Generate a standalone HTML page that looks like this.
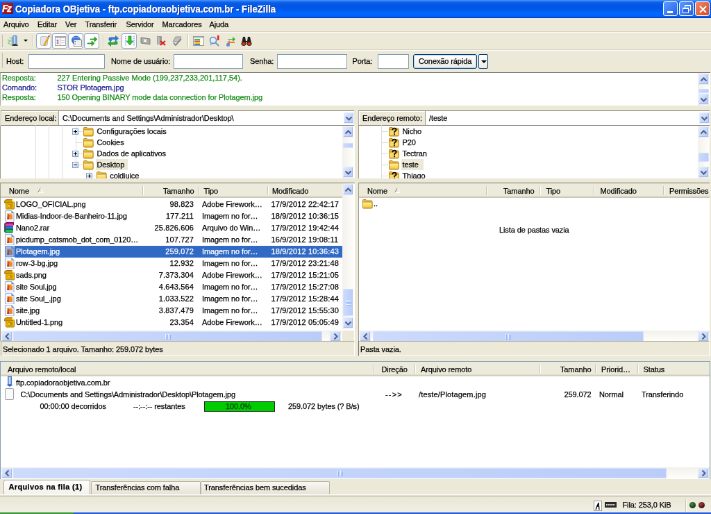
<!DOCTYPE html><html><head><meta charset="utf-8"><style>
html,body{margin:0;padding:0;width:711px;height:514px;overflow:hidden;background:#ECE9D8}
#root{will-change:transform;letter-spacing:-0.1px;position:absolute;left:0;top:0;width:1024px;height:741px;transform:scale(0.6943359375);transform-origin:0 0;background:#ECE9D8;overflow:hidden;font-family:"Liberation Sans",sans-serif;font-size:11px;color:#000}
#root div{box-sizing:border-box}
.t{position:absolute;white-space:nowrap;-webkit-text-stroke:0.25px currentColor}
</style></head><body><div id="root">
<div style="position:absolute;left:0px;top:0px;width:1024px;height:26px;background:linear-gradient(#4A9BFF 0px,#2A7BF5 1.5px,#0A5CE6 4px,#0055E3 10px,#005CEE 15px,#0066FF 19px,#0064FA 23.5px,#0044CC 25px,#003CC0 26px);"></div>
<div style="position:absolute;left:3px;top:4px;width:16px;height:16px;background:linear-gradient(135deg,#C82020,#8A0808);"><div class="t" style="left:0px;top:0px;color:#fff;font:italic bold 14px/16px Liberation Sans;letter-spacing:-1.5px">Fz</div></div>
<div class="t" style="left:21.5px;top:5.0px;line-height:16px;color:#fff;font-weight:bold;font-size:14px;letter-spacing:0px;transform:scaleX(0.94);transform-origin:0 0;text-shadow:1px 1px #0A1E8C">Copiadora OBjetiva - ftp.copiadoraobjetiva.com.br - FileZilla</div>
<div style="position:absolute;left:955px;top:2px;width:21px;height:21px;background:linear-gradient(135deg,#5C9BFF,#2462E8);border:1px solid #fff;border-radius:3px;"><div style="position:absolute;left:5px;top:13px;width:8px;height:3px;background:#fff"></div></div>
<div style="position:absolute;left:978px;top:2px;width:21px;height:21px;background:linear-gradient(135deg,#5C9BFF,#2462E8);border:1px solid #fff;border-radius:3px;"><div style="position:absolute;left:7px;top:4px;width:9px;height:8px;border:1px solid #fff;border-top-width:2px"></div><div style="position:absolute;left:4px;top:8px;width:9px;height:8px;border:1px solid #fff;border-top-width:2px;background:#2A67EA"></div></div>
<div style="position:absolute;left:1001px;top:2px;width:21px;height:21px;background:linear-gradient(135deg,#F08A6C,#D44A20);border:1px solid #fff;border-radius:3px;"><svg width="21" height="21" style="position:absolute;left:0;top:0"><path d="M6 6 L15 15 M15 6 L6 15" stroke="#fff" stroke-width="2"/></svg></div>
<div class="t" style="left:5px;top:28.5px;line-height:13px;">Arquivo</div>
<div class="t" style="left:54px;top:28.5px;line-height:13px;">Editar</div>
<div class="t" style="left:94px;top:28.5px;line-height:13px;">Ver</div>
<div class="t" style="left:122.5px;top:28.5px;line-height:13px;">Transferir</div>
<div class="t" style="left:181.5px;top:28.5px;line-height:13px;">Servidor</div>
<div class="t" style="left:233.5px;top:28.5px;line-height:13px;">Marcadores</div>
<div class="t" style="left:301.5px;top:28.5px;line-height:13px;">Ajuda</div>
<div style="position:absolute;left:0px;top:45px;width:1024px;height:1px;background:#D8D4C4;"></div>
<div style="position:absolute;left:0px;top:46px;width:1024px;height:1px;background:#FFFFFF;"></div>
<div style="position:absolute;left:3px;top:50px;width:1px;height:18px;background:#C1BDA9;"></div>
<div style="position:absolute;left:47px;top:50px;width:1px;height:18px;background:#C5C2B2;"></div>
<div style="position:absolute;left:48px;top:50px;width:1px;height:18px;background:#fff;"></div>
<div style="position:absolute;left:148px;top:50px;width:1px;height:18px;background:#C5C2B2;"></div>
<div style="position:absolute;left:149px;top:50px;width:1px;height:18px;background:#fff;"></div>
<div style="position:absolute;left:270px;top:50px;width:1px;height:18px;background:#C5C2B2;"></div>
<div style="position:absolute;left:271px;top:50px;width:1px;height:18px;background:#fff;"></div>
<div style="position:absolute;left:52.3px;top:48px;width:22px;height:22px;background:#FDFDFC;border:1.6px solid #8CA6CC;border-radius:3px;"></div>
<div style="position:absolute;left:75.3px;top:48px;width:22px;height:22px;background:#FDFDFC;border:1.6px solid #8CA6CC;border-radius:3px;"></div>
<div style="position:absolute;left:98.3px;top:48px;width:22px;height:22px;background:#FDFDFC;border:1.6px solid #8CA6CC;border-radius:3px;"></div>
<div style="position:absolute;left:121.3px;top:48px;width:22px;height:22px;background:#FDFDFC;border:1.6px solid #8CA6CC;border-radius:3px;"></div>
<div style="position:absolute;left:175.3px;top:48px;width:22px;height:22px;background:#FDFDFC;border:1.6px solid #8CA6CC;border-radius:3px;"></div>
<svg style="position:absolute;left:10px;top:50.5px" width="16" height="16" viewBox="0 0 16 16"><path d="M2 3 l4 2 l-2 3 l3 3 l-3 3 l4 1 v-13z" fill="#A8D8A8"/><path d="M1 6 l3 2 l-2 3 l3 2" stroke="#8CC88C" fill="none" stroke-width="1.5"/><rect x="8.5" y="0.5" width="5.5" height="12" rx="1" fill="#80A8E8" stroke="#5A84CC"/><rect x="10" y="1" width="1.6" height="11" fill="#D0E2FC"/><rect x="7.5" y="13" width="8" height="2" fill="#303030"/><rect x="10.5" y="12" width="2" height="2" fill="#303030"/></svg>
<svg style="position:absolute;left:55.5px;top:50.5px" width="16" height="16" viewBox="0 0 16 16"><rect x="2.5" y="1.5" width="10" height="13" rx="1.5" fill="#E6E6EA" stroke="#C4C4C8"/><path d="M14.5 1.5 L7.5 14.5" stroke="#B87000" stroke-width="2.4"/><path d="M14.5 1.5 L7.5 14.5" stroke="#F8C828" stroke-width="1.2"/><path d="M13.8 0.5 L15.5 1.5" stroke="#D03020" stroke-width="2"/></svg>
<svg style="position:absolute;left:78.5px;top:50.5px" width="16" height="16" viewBox="0 0 16 16"><rect x="0.5" y="1.5" width="15" height="13" fill="#FAFAFA" stroke="#A8A8A8"/><rect x="1" y="2" width="14" height="2" fill="#B8B8C0"/><path d="M7.5 4 v10" stroke="#B8B8B8"/><circle cx="4" cy="7.5" r="1.4" fill="#5A8AE0"/><circle cx="4" cy="11" r="1.4" fill="#E05A5A"/><path d="M9 7.5 h5 M9 10.5 h5" stroke="#D0D0D0"/></svg>
<svg style="position:absolute;left:101.5px;top:50.5px" width="16" height="16" viewBox="0 0 16 16"><circle cx="7.5" cy="7" r="6.5" fill="#3A74D8"/><path d="M3 4 q4 -2 9 0" stroke="#A8C8F8" fill="none"/><rect x="4.5" y="6.5" width="11" height="9" fill="#FAFAFA" stroke="#8C8C8C"/><circle cx="6.5" cy="9" r="1" fill="#3A7AE0"/><circle cx="6.5" cy="12.5" r="1" fill="#E07070"/><path d="M9 9.5 h5 M9 12.5 h5" stroke="#C8C8C8"/></svg>
<svg style="position:absolute;left:124.5px;top:50.5px" width="16" height="16" viewBox="0 0 16 16"><path d="M5 5 h6 v-3 l4 3.5 l-4 3.5 v-3 h-6z" fill="#20B020" stroke="#0A7A0A" stroke-width="0.6"/><path d="M1 11 h6 v-3 l4 3.5 l-4 3.5 v-3 h-6z" fill="#20B020" stroke="#0A7A0A" stroke-width="0.6"/></svg>
<svg style="position:absolute;left:155px;top:50.5px" width="16" height="16" viewBox="0 0 16 16"><path d="M2 7 v-2.5 q0 -1.5 1.5 -1.5 h8 v-2.5 l4 3.8 l-4 3.8 v-2.5 h-6 v2z" fill="#2A7CE8" stroke="#0A4AA8" stroke-width="0.6"/><path d="M14 9 v2.5 q0 1.5 -1.5 1.5 h-8 v2.5 l-4 -3.8 l4 -3.8 v2.5 h6 v-2z" fill="#20B040" stroke="#0A7020" stroke-width="0.6"/></svg>
<svg style="position:absolute;left:178.5px;top:50.5px" width="16" height="16" viewBox="0 0 16 16"><path d="M2 1 v14 M14 1 v14" stroke="#7AA8E8" stroke-dasharray="1.5 1.5" stroke-width="1.5"/><path d="M6 1 h4 v7 h3 l-5 6 l-5 -6 h3z" fill="#30C030" stroke="#0A7A0A" stroke-width="0.6"/></svg>
<svg style="position:absolute;left:201.5px;top:50.5px" width="16" height="16" viewBox="0 0 16 16"><path d="M1 3 l13 2 v8 l-13 -2z" fill="#A8A8A8" stroke="#808080"/><path d="M5 5.5 l4 4 M9 5.5 l-4 4" stroke="#fff" stroke-width="1.6"/></svg>
<svg style="position:absolute;left:224px;top:50.5px" width="16" height="16" viewBox="0 0 16 16"><rect x="2" y="1" width="7" height="12" rx="1" fill="#9A9A9A"/><rect x="3.5" y="2" width="2" height="10" fill="#C8C8C8"/><path d="M7 8 l7 6 M14 8 l-7 6" stroke="#E01818" stroke-width="2.2"/></svg>
<svg style="position:absolute;left:247px;top:50.5px" width="16" height="16" viewBox="0 0 16 16"><path d="M2 9 l4 -7 h8 l-4 7z" fill="#C0C0C0" stroke="#909090"/><path d="M3 11 l3 3 l8 -9" stroke="#8A8A8A" stroke-width="2" fill="none"/></svg>
<svg style="position:absolute;left:278px;top:50.5px" width="16" height="16" viewBox="0 0 16 16"><rect x="0.5" y="1.5" width="15" height="13" fill="#F4F4F4" stroke="#9A9A9A"/><rect x="1" y="2" width="14" height="2" fill="#B8C8E0"/><rect x="2" y="5" width="8" height="2" fill="#40C040"/><rect x="2" y="7.5" width="8" height="2" fill="#E04040"/><rect x="2" y="10" width="8" height="2" fill="#F0D020"/><rect x="2" y="12" width="8" height="2" fill="#4080E0"/><rect x="10.5" y="5" width="4" height="9" fill="#FFFFE0"/></svg>
<svg style="position:absolute;left:301px;top:50.5px" width="16" height="16" viewBox="0 0 16 16"><circle cx="6" cy="7" r="4.5" fill="#E8F0FF" stroke="#5080C8" stroke-width="1.4"/><path d="M9 10 l5 5" stroke="#8090A0" stroke-width="2"/><rect x="12" y="0" width="2.5" height="7" fill="#E02020"/><path d="M2 14 l2 -3" stroke="#80A8E0" stroke-width="2"/></svg>
<svg style="position:absolute;left:325px;top:50.5px" width="16" height="16" viewBox="0 0 16 16"><path d="M3 5 h7 v-3 l4 3.5 l-4 3.5 v-3 h-7z" fill="#30B030"/><path d="M13 9 h-7 v-2 l-4 3 l4 3 v-2 h7z" fill="#F08020"/><rect x="1" y="11" width="5" height="5" rx="2" fill="#5A90E0"/></svg>
<svg style="position:absolute;left:347px;top:50.5px" width="16" height="16" viewBox="0 0 16 16"><path d="M3 2 h3 l1 6 h2 l1 -6 h3 l2 9 h-5 l-1 -1 h-2 l-1 1 h-5z" fill="#202020"/><ellipse cx="4" cy="12" rx="3.2" ry="2.5" fill="#E83010" stroke="#202020"/><ellipse cx="12" cy="12" rx="3.2" ry="2.5" fill="#E83010" stroke="#202020"/></svg>
<div style="position:absolute;left:34px;top:57px;width:0;height:0;border-left:3px solid transparent;border-right:3px solid transparent;border-top:3px solid #000"></div>
<div style="position:absolute;left:0px;top:71px;width:1024px;height:1px;background:#D8D4C4;"></div>
<div style="position:absolute;left:0px;top:72px;width:1024px;height:1px;background:#FFFFFF;"></div>
<div style="position:absolute;left:3px;top:76px;width:1px;height:22px;background:#C1BDA9;"></div>
<div class="t" style="left:9px;top:81.5px;line-height:13px;">Host:</div>
<div class="t" style="left:160px;top:81.5px;line-height:13px;">Nome de usuário:</div>
<div class="t" style="left:360px;top:81.5px;line-height:13px;">Senha:</div>
<div class="t" style="left:507.5px;top:81.5px;line-height:13px;">Porta:</div>
<div style="position:absolute;left:40.5px;top:78px;width:110.5px;height:21px;background:#fff;border:1px solid #7F9DB9;"></div>
<div style="position:absolute;left:249.5px;top:78px;width:100px;height:21px;background:#fff;border:1px solid #7F9DB9;"></div>
<div style="position:absolute;left:398.5px;top:78px;width:101px;height:21px;background:#fff;border:1px solid #7F9DB9;"></div>
<div style="position:absolute;left:543.5px;top:78px;width:45.5px;height:21px;background:#fff;border:1px solid #7F9DB9;"></div>
<div style="position:absolute;left:594.5px;top:78px;width:92px;height:21px;background:linear-gradient(#FFFFFF,#ECEBE6);border:1px solid #003C74;border-radius:3px;box-shadow:inset 0 0 0 1px #B7CDF0;"></div>
<div class="t" style="left:603px;top:81.5px;line-height:13px;">Conexão rápida</div>
<div style="position:absolute;left:689px;top:78px;width:14px;height:21px;background:linear-gradient(#FFFFFF,#ECEBE6);border:1px solid #003C74;border-radius:2px;"><div style="position:absolute;left:3px;top:8px;width:0;height:0;border-left:4px solid transparent;border-right:4px solid transparent;border-top:4px solid #000"></div></div>
<div style="position:absolute;left:0px;top:104px;width:1023px;height:48px;background:#fff;border-top:1px solid #7A7A6E;border-left:1px solid #ACA899;"></div>
<div class="t" style="left:3px;top:105.5px;line-height:13px;color:#158A15">Resposta:</div>
<div class="t" style="left:82.5px;top:105.5px;line-height:13px;color:#158A15;letter-spacing:0px">227 Entering Passive Mode (199,237,233,201,117,54).</div>
<div class="t" style="left:3px;top:119.5px;line-height:13px;color:#15158A">Comando:</div>
<div class="t" style="left:82.5px;top:119.5px;line-height:13px;color:#15158A">STOR Plotagem.jpg</div>
<div class="t" style="left:3px;top:133.5px;line-height:13px;color:#158A15">Resposta:</div>
<div class="t" style="left:82.5px;top:133.5px;line-height:13px;color:#158A15">150 Opening BINARY mode data connection for Plotagem.jpg</div>
<div style="position:absolute;left:1005px;top:105px;width:17px;height:47px;background:linear-gradient(90deg,#F3F1EC,#FEFEFB);"></div>
<div style="position:absolute;left:1006px;top:106px;width:15px;height:16px;background:linear-gradient(135deg,#E6EEFF 0%,#C9D8FC 50%,#B4C8F6 100%);border-radius:2px;box-shadow:inset 0 0 0 1px #E4ECFE, inset -1px -1px 0 1px #A6BAE8;"><svg width="15" height="16" viewBox="0 -0.5 15 15" style="position:absolute;left:0;top:0"><path d="M3.5 9.5 L7.5 5.5 L11.5 9.5" fill="none" stroke="#4D6185" stroke-width="2"/></svg></div>
<div style="position:absolute;left:1006px;top:135px;width:15px;height:16px;background:linear-gradient(135deg,#E6EEFF 0%,#C9D8FC 50%,#B4C8F6 100%);border-radius:2px;box-shadow:inset 0 0 0 1px #E4ECFE, inset -1px -1px 0 1px #A6BAE8;"><svg width="15" height="16" viewBox="0 -0.5 15 15" style="position:absolute;left:0;top:0"><path d="M3.5 5.5 L7.5 9.5 L11.5 5.5" fill="none" stroke="#4D6185" stroke-width="2"/></svg></div>
<div style="position:absolute;left:1006px;top:128px;width:15px;height:6px;background:linear-gradient(90deg,#CCDAFD,#BACDF8);border-radius:2px;box-shadow:inset 0 0 0 1px #D5E0FC;"></div>
<div style="position:absolute;left:1px;top:159px;width:509px;height:22px;background:#fff;border-top:1px solid #8A8778;border-bottom:1px solid #77756A;border-left:1px solid #ACA899;"></div>
<div style="position:absolute;left:2px;top:160px;width:83px;height:20px;background:#ECE9D8;border-right:1px solid #9D9A8A;box-shadow:inset 1px 1px #fff;"></div>
<div class="t" style="left:7px;top:164.0px;line-height:13px;">Endereço local:</div>
<div class="t" style="left:90px;top:164.0px;line-height:13px;">C:\Documents and Settings\Administrador\Desktop\</div>
<div style="position:absolute;left:495px;top:162px;width:15px;height:16px;background:linear-gradient(135deg,#E6EEFF 0%,#C9D8FC 50%,#B4C8F6 100%);border-radius:2px;box-shadow:inset 0 0 0 1px #E4ECFE, inset -1px -1px 0 1px #A6BAE8;"><svg width="15" height="16" viewBox="0 -0.5 15 15" style="position:absolute;left:0;top:0"><path d="M3.5 5.5 L7.5 9.5 L11.5 5.5" fill="none" stroke="#4D6185" stroke-width="2"/></svg></div>
<div style="position:absolute;left:516px;top:159px;width:506px;height:22px;background:#fff;border-top:1px solid #8A8778;border-bottom:1px solid #77756A;border-left:1px solid #ACA899;"></div>
<div style="position:absolute;left:517px;top:160px;width:96px;height:20px;background:#ECE9D8;border-right:1px solid #9D9A8A;box-shadow:inset 1px 1px #fff;"></div>
<div class="t" style="left:522px;top:164.0px;line-height:13px;">Endereço remoto:</div>
<div class="t" style="left:618px;top:164.0px;line-height:13px;">/teste</div>
<div style="position:absolute;left:1007px;top:162px;width:15px;height:16px;background:linear-gradient(135deg,#E6EEFF 0%,#C9D8FC 50%,#B4C8F6 100%);border-radius:2px;box-shadow:inset 0 0 0 1px #E4ECFE, inset -1px -1px 0 1px #A6BAE8;"><svg width="15" height="16" viewBox="0 -0.5 15 15" style="position:absolute;left:0;top:0"><path d="M3.5 5.5 L7.5 9.5 L11.5 5.5" fill="none" stroke="#4D6185" stroke-width="2"/></svg></div>
<div style="position:absolute;left:0px;top:181px;width:511px;height:76px;background:#fff;border-left:1px solid #9D9A8A;"></div>
<div style="position:absolute;left:493px;top:181px;width:17px;height:76px;background:linear-gradient(90deg,#F3F1EC,#FEFEFB);"></div>
<div style="position:absolute;left:494px;top:182px;width:15px;height:16px;background:linear-gradient(135deg,#E6EEFF 0%,#C9D8FC 50%,#B4C8F6 100%);border-radius:2px;box-shadow:inset 0 0 0 1px #E4ECFE, inset -1px -1px 0 1px #A6BAE8;"><svg width="15" height="16" viewBox="0 -0.5 15 15" style="position:absolute;left:0;top:0"><path d="M3.5 9.5 L7.5 5.5 L11.5 9.5" fill="none" stroke="#4D6185" stroke-width="2"/></svg></div>
<div style="position:absolute;left:494px;top:240px;width:15px;height:16px;background:linear-gradient(135deg,#E6EEFF 0%,#C9D8FC 50%,#B4C8F6 100%);border-radius:2px;box-shadow:inset 0 0 0 1px #E4ECFE, inset -1px -1px 0 1px #A6BAE8;"><svg width="15" height="16" viewBox="0 -0.5 15 15" style="position:absolute;left:0;top:0"><path d="M3.5 5.5 L7.5 9.5 L11.5 5.5" fill="none" stroke="#4D6185" stroke-width="2"/></svg></div>
<div style="position:absolute;left:494px;top:206px;width:15px;height:7px;background:linear-gradient(90deg,#CCDAFD,#BACDF8);border-radius:2px;box-shadow:inset 0 0 0 1px #D5E0FC;"></div>
<div style="position:absolute;left:50.5px;top:180px;width:1px;height:77px;background:#DCDCDC;"></div>
<div style="position:absolute;left:69.5px;top:180px;width:1px;height:77px;background:#DCDCDC;"></div>
<div style="position:absolute;left:88.5px;top:180px;width:1px;height:77px;background:#DCDCDC;"></div>
<div style="position:absolute;left:108.5px;top:180px;width:1px;height:57px;background:#DCDCDC;"></div>
<div style="position:absolute;left:108.5px;top:189px;width:10px;height:1px;background:#DCDCDC;"></div>
<svg style="position:absolute;left:104px;top:185px" width="9" height="9" viewBox="0 0 9 9"><defs><linearGradient id="pb" x1="0" y1="0" x2="1" y2="1"><stop offset="0" stop-color="#fff"/><stop offset="1" stop-color="#C4D0E4"/></linearGradient></defs><rect x="0.5" y="0.5" width="8" height="8" fill="url(#pb)" stroke="#7DA2CE"/><path d="M2 4.5 h5" stroke="#000"/><path d="M4.5 2 v5" stroke="#000"/></svg>
<svg style="position:absolute;left:118.5px;top:181px" width="16" height="16" viewBox="0 0 16 16"><defs><linearGradient id="ff" x1="0" y1="0" x2="0" y2="1"><stop offset="0" stop-color="#FFF2A8"/><stop offset="1" stop-color="#F2C632"/></linearGradient></defs><path d="M1.5 3.5 q0 -1 1 -1 h3.5 l1.5 1.5 h6.5 q1 0 1 1 v9 q0 1 -1 1 h-11.5 q-1 0 -1 -1z" fill="#EDBA3C" stroke="#B8841A"/><path d="M1.5 7 q0 -1 1 -1 h11.5 q1 0 1 1 v6.5 q0 1 -1 1 h-11.5 q-1 0 -1 -1z" fill="url(#ff)" stroke="#C08A1C"/></svg>
<div class="t" style="left:139.5px;top:182.5px;line-height:13px;">Configurações locais</div>
<div style="position:absolute;left:108.5px;top:205px;width:10px;height:1px;background:#DCDCDC;"></div>
<svg style="position:absolute;left:118.5px;top:197px" width="16" height="16" viewBox="0 0 16 16"><defs><linearGradient id="ff" x1="0" y1="0" x2="0" y2="1"><stop offset="0" stop-color="#FFF2A8"/><stop offset="1" stop-color="#F2C632"/></linearGradient></defs><path d="M1.5 3.5 q0 -1 1 -1 h3.5 l1.5 1.5 h6.5 q1 0 1 1 v9 q0 1 -1 1 h-11.5 q-1 0 -1 -1z" fill="#EDBA3C" stroke="#B8841A"/><path d="M1.5 7 q0 -1 1 -1 h11.5 q1 0 1 1 v6.5 q0 1 -1 1 h-11.5 q-1 0 -1 -1z" fill="url(#ff)" stroke="#C08A1C"/></svg>
<div class="t" style="left:139.5px;top:198.5px;line-height:13px;">Cookies</div>
<div style="position:absolute;left:108.5px;top:221px;width:10px;height:1px;background:#DCDCDC;"></div>
<svg style="position:absolute;left:104px;top:217px" width="9" height="9" viewBox="0 0 9 9"><defs><linearGradient id="pb" x1="0" y1="0" x2="1" y2="1"><stop offset="0" stop-color="#fff"/><stop offset="1" stop-color="#C4D0E4"/></linearGradient></defs><rect x="0.5" y="0.5" width="8" height="8" fill="url(#pb)" stroke="#7DA2CE"/><path d="M2 4.5 h5" stroke="#000"/><path d="M4.5 2 v5" stroke="#000"/></svg>
<svg style="position:absolute;left:118.5px;top:213px" width="16" height="16" viewBox="0 0 16 16"><defs><linearGradient id="ff" x1="0" y1="0" x2="0" y2="1"><stop offset="0" stop-color="#FFF2A8"/><stop offset="1" stop-color="#F2C632"/></linearGradient></defs><path d="M1.5 3.5 q0 -1 1 -1 h3.5 l1.5 1.5 h6.5 q1 0 1 1 v9 q0 1 -1 1 h-11.5 q-1 0 -1 -1z" fill="#EDBA3C" stroke="#B8841A"/><path d="M1.5 7 q0 -1 1 -1 h11.5 q1 0 1 1 v6.5 q0 1 -1 1 h-11.5 q-1 0 -1 -1z" fill="url(#ff)" stroke="#C08A1C"/></svg>
<div class="t" style="left:139.5px;top:214.5px;line-height:13px;">Dados de aplicativos</div>
<div style="position:absolute;left:108.5px;top:237px;width:10px;height:1px;background:#DCDCDC;"></div>
<div style="position:absolute;left:138px;top:229px;width:46px;height:16px;background:#ECE9D8;"></div>
<svg style="position:absolute;left:104px;top:233px" width="9" height="9" viewBox="0 0 9 9"><defs><linearGradient id="pb" x1="0" y1="0" x2="1" y2="1"><stop offset="0" stop-color="#fff"/><stop offset="1" stop-color="#C4D0E4"/></linearGradient></defs><rect x="0.5" y="0.5" width="8" height="8" fill="url(#pb)" stroke="#7DA2CE"/><path d="M2 4.5 h5" stroke="#000"/></svg>
<svg style="position:absolute;left:118.5px;top:229px" width="16" height="16" viewBox="0 0 16 16"><defs><linearGradient id="ff" x1="0" y1="0" x2="0" y2="1"><stop offset="0" stop-color="#FFF2A8"/><stop offset="1" stop-color="#F2C632"/></linearGradient></defs><path d="M1.5 3.5 q0 -1 1 -1 h3.5 l1.5 1.5 h6.5 q1 0 1 1 v9 q0 1 -1 1 h-11.5 q-1 0 -1 -1z" fill="#EDBA3C" stroke="#B8841A"/><path d="M1.5 7 q0 -1 1 -1 h11.5 q1 0 1 1 v6.5 q0 1 -1 1 h-11.5 q-1 0 -1 -1z" fill="url(#ff)" stroke="#C08A1C"/></svg>
<div class="t" style="left:139.5px;top:230.5px;line-height:13px;">Desktop</div>
<div style="position:absolute;left:127.5px;top:245px;width:1px;height:8px;background:#DCDCDC;"></div>
<div style="position:absolute;left:127.5px;top:253px;width:10px;height:1px;background:#DCDCDC;"></div>
<svg style="position:absolute;left:123.5px;top:249px" width="9" height="9" viewBox="0 0 9 9"><defs><linearGradient id="pb" x1="0" y1="0" x2="1" y2="1"><stop offset="0" stop-color="#fff"/><stop offset="1" stop-color="#C4D0E4"/></linearGradient></defs><rect x="0.5" y="0.5" width="8" height="8" fill="url(#pb)" stroke="#7DA2CE"/><path d="M2 4.5 h5" stroke="#000"/><path d="M4.5 2 v5" stroke="#000"/></svg>
<svg style="position:absolute;left:137.5px;top:245px" width="16" height="16" viewBox="0 0 16 16"><defs><linearGradient id="ff" x1="0" y1="0" x2="0" y2="1"><stop offset="0" stop-color="#FFF2A8"/><stop offset="1" stop-color="#F2C632"/></linearGradient></defs><path d="M1.5 3.5 q0 -1 1 -1 h3.5 l1.5 1.5 h6.5 q1 0 1 1 v9 q0 1 -1 1 h-11.5 q-1 0 -1 -1z" fill="#EDBA3C" stroke="#B8841A"/><path d="M1.5 7 q0 -1 1 -1 h11.5 q1 0 1 1 v6.5 q0 1 -1 1 h-11.5 q-1 0 -1 -1z" fill="url(#ff)" stroke="#C08A1C"/></svg>
<div class="t" style="left:158.3px;top:246.5px;line-height:13px;">coldiuice</div>
<div style="position:absolute;left:516px;top:181px;width:506px;height:76px;background:#fff;border-left:1px solid #9D9A8A;"></div>
<div style="position:absolute;left:1005px;top:181px;width:17px;height:76px;background:linear-gradient(90deg,#F3F1EC,#FEFEFB);"></div>
<div style="position:absolute;left:1006px;top:182px;width:15px;height:16px;background:linear-gradient(135deg,#E6EEFF 0%,#C9D8FC 50%,#B4C8F6 100%);border-radius:2px;box-shadow:inset 0 0 0 1px #E4ECFE, inset -1px -1px 0 1px #A6BAE8;"><svg width="15" height="16" viewBox="0 -0.5 15 15" style="position:absolute;left:0;top:0"><path d="M3.5 9.5 L7.5 5.5 L11.5 9.5" fill="none" stroke="#4D6185" stroke-width="2"/></svg></div>
<div style="position:absolute;left:1006px;top:240px;width:15px;height:16px;background:linear-gradient(135deg,#E6EEFF 0%,#C9D8FC 50%,#B4C8F6 100%);border-radius:2px;box-shadow:inset 0 0 0 1px #E4ECFE, inset -1px -1px 0 1px #A6BAE8;"><svg width="15" height="16" viewBox="0 -0.5 15 15" style="position:absolute;left:0;top:0"><path d="M3.5 5.5 L7.5 9.5 L11.5 5.5" fill="none" stroke="#4D6185" stroke-width="2"/></svg></div>
<div style="position:absolute;left:1006px;top:220px;width:15px;height:13px;background:linear-gradient(90deg,#CCDAFD,#BACDF8);border-radius:2px;box-shadow:inset 0 0 0 1px #D5E0FC;"></div>
<div style="position:absolute;left:548.5px;top:180px;width:1px;height:77px;background:#DCDCDC;"></div>
<div style="position:absolute;left:548.5px;top:189px;width:10px;height:1px;background:#DCDCDC;"></div>
<svg style="position:absolute;left:558.5px;top:181px" width="16" height="16" viewBox="0 0 16 16"><path d="M1.5 3.5 q0 -1 1 -1 h3.5 l1.5 1.5 h6.5 q1 0 1 1 v9 q0 1 -1 1 h-11.5 q-1 0 -1 -1z" fill="#EDBA3C" stroke="#B8841A"/><path d="M1.5 7 q0 -1 1 -1 h11.5 q1 0 1 1 v6.5 q0 1 -1 1 h-11.5 q-1 0 -1 -1z" fill="#F8DA6A" stroke="#C08A1C"/><path d="M6.3 6.2 q0 -2.7 2.6 -2.7 q2.6 0 2.6 2.4 q0 1.5 -1.5 2.2 q-0.9 0.4 -0.9 1.6 v0.6" fill="none" stroke="#000" stroke-width="1.7"/><rect x="8.1" y="11.4" width="1.8" height="1.8" fill="#000"/></svg>
<div class="t" style="left:579.5px;top:182.5px;line-height:13px;">Nicho</div>
<div style="position:absolute;left:548.5px;top:205px;width:10px;height:1px;background:#DCDCDC;"></div>
<svg style="position:absolute;left:558.5px;top:197px" width="16" height="16" viewBox="0 0 16 16"><path d="M1.5 3.5 q0 -1 1 -1 h3.5 l1.5 1.5 h6.5 q1 0 1 1 v9 q0 1 -1 1 h-11.5 q-1 0 -1 -1z" fill="#EDBA3C" stroke="#B8841A"/><path d="M1.5 7 q0 -1 1 -1 h11.5 q1 0 1 1 v6.5 q0 1 -1 1 h-11.5 q-1 0 -1 -1z" fill="#F8DA6A" stroke="#C08A1C"/><path d="M6.3 6.2 q0 -2.7 2.6 -2.7 q2.6 0 2.6 2.4 q0 1.5 -1.5 2.2 q-0.9 0.4 -0.9 1.6 v0.6" fill="none" stroke="#000" stroke-width="1.7"/><rect x="8.1" y="11.4" width="1.8" height="1.8" fill="#000"/></svg>
<div class="t" style="left:579.5px;top:198.5px;line-height:13px;">P20</div>
<div style="position:absolute;left:548.5px;top:221px;width:10px;height:1px;background:#DCDCDC;"></div>
<svg style="position:absolute;left:558.5px;top:213px" width="16" height="16" viewBox="0 0 16 16"><path d="M1.5 3.5 q0 -1 1 -1 h3.5 l1.5 1.5 h6.5 q1 0 1 1 v9 q0 1 -1 1 h-11.5 q-1 0 -1 -1z" fill="#EDBA3C" stroke="#B8841A"/><path d="M1.5 7 q0 -1 1 -1 h11.5 q1 0 1 1 v6.5 q0 1 -1 1 h-11.5 q-1 0 -1 -1z" fill="#F8DA6A" stroke="#C08A1C"/><path d="M6.3 6.2 q0 -2.7 2.6 -2.7 q2.6 0 2.6 2.4 q0 1.5 -1.5 2.2 q-0.9 0.4 -0.9 1.6 v0.6" fill="none" stroke="#000" stroke-width="1.7"/><rect x="8.1" y="11.4" width="1.8" height="1.8" fill="#000"/></svg>
<div class="t" style="left:579.5px;top:214.5px;line-height:13px;">Tectran</div>
<div style="position:absolute;left:548.5px;top:237px;width:10px;height:1px;background:#DCDCDC;"></div>
<div style="position:absolute;left:578px;top:229px;width:32px;height:16px;background:#ECE9D8;"></div>
<svg style="position:absolute;left:558.5px;top:229px" width="16" height="16" viewBox="0 0 16 16"><defs><linearGradient id="ff" x1="0" y1="0" x2="0" y2="1"><stop offset="0" stop-color="#FFF2A8"/><stop offset="1" stop-color="#F2C632"/></linearGradient></defs><path d="M1.5 3.5 q0 -1 1 -1 h3.5 l1.5 1.5 h6.5 q1 0 1 1 v9 q0 1 -1 1 h-11.5 q-1 0 -1 -1z" fill="#EDBA3C" stroke="#B8841A"/><path d="M1.5 7 q0 -1 1 -1 h11.5 q1 0 1 1 v6.5 q0 1 -1 1 h-11.5 q-1 0 -1 -1z" fill="url(#ff)" stroke="#C08A1C"/></svg>
<div class="t" style="left:579.5px;top:230.5px;line-height:13px;">teste</div>
<div style="position:absolute;left:548.5px;top:253px;width:10px;height:1px;background:#DCDCDC;"></div>
<svg style="position:absolute;left:558.5px;top:245px" width="16" height="16" viewBox="0 0 16 16"><path d="M1.5 3.5 q0 -1 1 -1 h3.5 l1.5 1.5 h6.5 q1 0 1 1 v9 q0 1 -1 1 h-11.5 q-1 0 -1 -1z" fill="#EDBA3C" stroke="#B8841A"/><path d="M1.5 7 q0 -1 1 -1 h11.5 q1 0 1 1 v6.5 q0 1 -1 1 h-11.5 q-1 0 -1 -1z" fill="#F8DA6A" stroke="#C08A1C"/><path d="M6.3 6.2 q0 -2.7 2.6 -2.7 q2.6 0 2.6 2.4 q0 1.5 -1.5 2.2 q-0.9 0.4 -0.9 1.6 v0.6" fill="none" stroke="#000" stroke-width="1.7"/><rect x="8.1" y="11.4" width="1.8" height="1.8" fill="#000"/></svg>
<div class="t" style="left:579.5px;top:246.5px;line-height:13px;">Thiago</div>
<div style="position:absolute;left:0px;top:257px;width:1024px;height:6px;background:#ECE9D8;"></div>
<div style="position:absolute;left:0px;top:263px;width:511px;height:228px;background:#fff;border-top:1px solid #7A7866;border-left:1px solid #9D9A8A;"></div>
<div style="position:absolute;left:516px;top:263px;width:506px;height:228px;background:#fff;border-top:1px solid #7A7866;border-left:1px solid #9D9A8A;"></div>
<div style="position:absolute;left:1px;top:264px;width:492px;height:21px;background:#EBEADB;box-shadow:inset 0 -1px #CBC7B8, inset 0 -2px #D6D2C2, inset 0 -3px #E2DECD;"></div>
<div style="position:absolute;left:204.5px;top:268px;width:1px;height:13px;background:#C7C5B2;"></div>
<div style="position:absolute;left:205.5px;top:268px;width:1px;height:13px;background:#FFFFFF;"></div>
<div style="position:absolute;left:284.5px;top:268px;width:1px;height:13px;background:#C7C5B2;"></div>
<div style="position:absolute;left:285.5px;top:268px;width:1px;height:13px;background:#FFFFFF;"></div>
<div style="position:absolute;left:384.5px;top:268px;width:1px;height:13px;background:#C7C5B2;"></div>
<div style="position:absolute;left:385.5px;top:268px;width:1px;height:13px;background:#FFFFFF;"></div>
<div class="t" style="left:13px;top:268.9px;line-height:13px;">Nome</div>
<svg style="position:absolute;left:54px;top:269.5px" width="9" height="8" viewBox="0 0 9 8"><path d="M0.5 7.5 L4.5 0.5" stroke="#808080" fill="none"/><path d="M4.5 0.5 L8.5 7.5 H0.5" stroke="#FFFFFF" fill="none"/></svg>
<div class="t" style="right:744.5px;top:268.9px;line-height:13px;text-align:right;">Tamanho</div>
<div class="t" style="left:293.5px;top:268.9px;line-height:13px;">Tipo</div>
<div class="t" style="left:392px;top:268.9px;line-height:13px;">Modificado</div>
<div style="position:absolute;left:517px;top:264px;width:505px;height:21px;background:#EBEADB;box-shadow:inset 0 -1px #CBC7B8, inset 0 -2px #D6D2C2, inset 0 -3px #E2DECD;"></div>
<div style="position:absolute;left:700px;top:268px;width:1px;height:13px;background:#C7C5B2;"></div>
<div style="position:absolute;left:701px;top:268px;width:1px;height:13px;background:#FFFFFF;"></div>
<div style="position:absolute;left:776.5px;top:268px;width:1px;height:13px;background:#C7C5B2;"></div>
<div style="position:absolute;left:777.5px;top:268px;width:1px;height:13px;background:#FFFFFF;"></div>
<div style="position:absolute;left:855px;top:268px;width:1px;height:13px;background:#C7C5B2;"></div>
<div style="position:absolute;left:856px;top:268px;width:1px;height:13px;background:#FFFFFF;"></div>
<div style="position:absolute;left:954.5px;top:268px;width:1px;height:13px;background:#C7C5B2;"></div>
<div style="position:absolute;left:955.5px;top:268px;width:1px;height:13px;background:#FFFFFF;"></div>
<div class="t" style="left:529px;top:268.9px;line-height:13px;">Nome</div>
<svg style="position:absolute;left:568px;top:269.5px" width="9" height="8" viewBox="0 0 9 8"><path d="M0.5 7.5 L4.5 0.5" stroke="#808080" fill="none"/><path d="M4.5 0.5 L8.5 7.5 H0.5" stroke="#FFFFFF" fill="none"/></svg>
<div class="t" style="right:254.5px;top:268.9px;line-height:13px;text-align:right;">Tamanho</div>
<div class="t" style="left:786.5px;top:268.9px;line-height:13px;">Tipo</div>
<div class="t" style="left:864.5px;top:268.9px;line-height:13px;">Modificado</div>
<div class="t" style="left:964px;top:268.9px;line-height:13px;">Permissões</div>
<svg style="position:absolute;left:6px;top:285.5px" width="16" height="16" viewBox="0 0 16 16"><rect x="2.5" y="4.5" width="12" height="10.5" rx="1" fill="#E8B808" stroke="#A07000"/><path d="M0.5 4.5 q0 -3 3 -3 h8 l1 2 v2.5 h-12z" fill="#D89A00" stroke="#A07000"/><rect x="5" y="8" width="7" height="5" fill="#C89000"/><rect x="6" y="9" width="2" height="3" fill="#F0D040"/><circle cx="13" cy="3" r="1.8" fill="#FFF8B0"/></svg>
<div class="t" style="left:23px;top:288.0px;line-height:13px;color:#000">LOGO_OFICIAL.png</div>
<div class="t" style="right:745px;top:288.0px;line-height:13px;text-align:right;color:#000;letter-spacing:0.15px">98.823</div>
<div class="t" style="left:291px;top:288.0px;line-height:13px;color:#000">Adobe Firework…</div>
<div class="t" style="left:390.5px;top:288.0px;line-height:13px;color:#000;letter-spacing:0.15px">17/9/2012 22:42:17</div>
<svg style="position:absolute;left:6px;top:302.5px" width="16" height="16" viewBox="0 0 16 16"><path d="M2.5 0.5 h8 l3.5 3.5 v11 q0 1 -1 1 h-10.5 q-1 0 -1 -1 v-13.5 q0 -1 1 -1z" fill="#F6F9FF" stroke="#98B2E0" stroke-width="1.2"/><path d="M10.5 0.5 v3.5 h3.5z" fill="#5A8AE0"/><rect x="4" y="4" width="8" height="9" fill="#F8D070"/><path d="M4 13 L5 5 L8 6 L7 13z" fill="#E04A18"/><path d="M7 13 L9 5 L12 7 L12 13z" fill="#F08A28"/><path d="M5 13 L6 9 L7 13z" fill="#6A3AA0"/></svg>
<div class="t" style="left:23px;top:305.0px;line-height:13px;color:#000">Midias-Indoor-de-Banheiro-11.jpg</div>
<div class="t" style="right:745px;top:305.0px;line-height:13px;text-align:right;color:#000;letter-spacing:0.15px">177.211</div>
<div class="t" style="left:291px;top:305.0px;line-height:13px;color:#000">Imagem no for…</div>
<div class="t" style="left:390.5px;top:305.0px;line-height:13px;color:#000;letter-spacing:0.15px">18/9/2012 10:36:15</div>
<svg style="position:absolute;left:5px;top:319.5px" width="16" height="16" viewBox="0 0 16 16"><path d="M1 2 l3 -2 h11 v4 l-2 1.5 h-11z" fill="#8A0A5A"/><rect x="3" y="2" width="11" height="3" fill="#E040A8"/><path d="M1 6.5 l2 -1 h11 v4 l-1 1 h-11z" fill="#0A3A8A"/><rect x="3" y="6.5" width="11" height="3" fill="#2A7AE0"/><path d="M1 11 l2 -1 h11 v4 l-1 1.5 h-11z" fill="#0A6A2A"/><rect x="3" y="11" width="11" height="3.5" fill="#20C060"/><path d="M1 3 l2 1 l-2 1 l2 1 l-2 1 l2 1 l-2 1 l2 1 l-2 1 l2 1 l-2 1 l2 1" stroke="#444" fill="none" stroke-width="0.9"/></svg>
<div class="t" style="left:23px;top:322.0px;line-height:13px;color:#000">Nano2.rar</div>
<div class="t" style="right:745px;top:322.0px;line-height:13px;text-align:right;color:#000;letter-spacing:0.15px">25.826.606</div>
<div class="t" style="left:291px;top:322.0px;line-height:13px;color:#000">Arquivo do Win…</div>
<div class="t" style="left:390.5px;top:322.0px;line-height:13px;color:#000;letter-spacing:0.15px">17/9/2012 19:42:44</div>
<svg style="position:absolute;left:6px;top:336.5px" width="16" height="16" viewBox="0 0 16 16"><path d="M2.5 0.5 h8 l3.5 3.5 v11 q0 1 -1 1 h-10.5 q-1 0 -1 -1 v-13.5 q0 -1 1 -1z" fill="#F6F9FF" stroke="#98B2E0" stroke-width="1.2"/><path d="M10.5 0.5 v3.5 h3.5z" fill="#5A8AE0"/><rect x="4" y="4" width="8" height="9" fill="#F8D070"/><path d="M4 13 L5 5 L8 6 L7 13z" fill="#E04A18"/><path d="M7 13 L9 5 L12 7 L12 13z" fill="#F08A28"/><path d="M5 13 L6 9 L7 13z" fill="#6A3AA0"/></svg>
<div class="t" style="left:23px;top:339.0px;line-height:13px;color:#000">picdump_catsmob_dot_com_0120…</div>
<div class="t" style="right:745px;top:339.0px;line-height:13px;text-align:right;color:#000;letter-spacing:0.15px">107.727</div>
<div class="t" style="left:291px;top:339.0px;line-height:13px;color:#000">Imagem no for…</div>
<div class="t" style="left:390.5px;top:339.0px;line-height:13px;color:#000;letter-spacing:0.15px">16/9/2012 19:08:11</div>
<div style="position:absolute;left:21px;top:354px;width:472px;height:17px;background:#316AC5;"></div>
<svg style="position:absolute;left:6px;top:353.5px" width="16" height="16" viewBox="0 0 16 16"><path d="M2.5 0.5 h8 l3.5 3.5 v11 q0 1 -1 1 h-10.5 q-1 0 -1 -1 v-13.5 q0 -1 1 -1z" fill="#F6F9FF" stroke="#98B2E0" stroke-width="1.2"/><path d="M10.5 0.5 v3.5 h3.5z" fill="#5A8AE0"/><rect x="4" y="4" width="8" height="9" fill="#F8D070"/><path d="M4 13 L5 5 L8 6 L7 13z" fill="#E04A18"/><path d="M7 13 L9 5 L12 7 L12 13z" fill="#F08A28"/><path d="M5 13 L6 9 L7 13z" fill="#6A3AA0"/><rect x="1" y="0" width="14" height="16" fill="#316AC5" opacity="0.45"/></svg>
<div class="t" style="left:23px;top:356.0px;line-height:13px;color:#fff">Plotagem.jpg</div>
<div class="t" style="right:745px;top:356.0px;line-height:13px;text-align:right;color:#fff;letter-spacing:0.15px">259.072</div>
<div class="t" style="left:291px;top:356.0px;line-height:13px;color:#fff">Imagem no for…</div>
<div class="t" style="left:390.5px;top:356.0px;line-height:13px;color:#fff;letter-spacing:0.15px">18/9/2012 10:36:43</div>
<svg style="position:absolute;left:6px;top:370.5px" width="16" height="16" viewBox="0 0 16 16"><path d="M2.5 0.5 h8 l3.5 3.5 v11 q0 1 -1 1 h-10.5 q-1 0 -1 -1 v-13.5 q0 -1 1 -1z" fill="#F6F9FF" stroke="#98B2E0" stroke-width="1.2"/><path d="M10.5 0.5 v3.5 h3.5z" fill="#5A8AE0"/><rect x="4" y="4" width="8" height="9" fill="#F8D070"/><path d="M4 13 L5 5 L8 6 L7 13z" fill="#E04A18"/><path d="M7 13 L9 5 L12 7 L12 13z" fill="#F08A28"/><path d="M5 13 L6 9 L7 13z" fill="#6A3AA0"/></svg>
<div class="t" style="left:23px;top:373.0px;line-height:13px;color:#000">row-3-bg.jpg</div>
<div class="t" style="right:745px;top:373.0px;line-height:13px;text-align:right;color:#000;letter-spacing:0.15px">12.932</div>
<div class="t" style="left:291px;top:373.0px;line-height:13px;color:#000">Imagem no for…</div>
<div class="t" style="left:390.5px;top:373.0px;line-height:13px;color:#000;letter-spacing:0.15px">17/9/2012 23:21:48</div>
<svg style="position:absolute;left:6px;top:387.5px" width="16" height="16" viewBox="0 0 16 16"><rect x="2.5" y="4.5" width="12" height="10.5" rx="1" fill="#E8B808" stroke="#A07000"/><path d="M0.5 4.5 q0 -3 3 -3 h8 l1 2 v2.5 h-12z" fill="#D89A00" stroke="#A07000"/><rect x="5" y="8" width="7" height="5" fill="#C89000"/><rect x="6" y="9" width="2" height="3" fill="#F0D040"/><circle cx="13" cy="3" r="1.8" fill="#FFF8B0"/></svg>
<div class="t" style="left:23px;top:390.0px;line-height:13px;color:#000">sads.png</div>
<div class="t" style="right:745px;top:390.0px;line-height:13px;text-align:right;color:#000;letter-spacing:0.15px">7.373.304</div>
<div class="t" style="left:291px;top:390.0px;line-height:13px;color:#000">Adobe Firework…</div>
<div class="t" style="left:390.5px;top:390.0px;line-height:13px;color:#000;letter-spacing:0.15px">17/9/2012 15:21:05</div>
<svg style="position:absolute;left:6px;top:404.5px" width="16" height="16" viewBox="0 0 16 16"><path d="M2.5 0.5 h8 l3.5 3.5 v11 q0 1 -1 1 h-10.5 q-1 0 -1 -1 v-13.5 q0 -1 1 -1z" fill="#F6F9FF" stroke="#98B2E0" stroke-width="1.2"/><path d="M10.5 0.5 v3.5 h3.5z" fill="#5A8AE0"/><rect x="4" y="4" width="8" height="9" fill="#F8D070"/><path d="M4 13 L5 5 L8 6 L7 13z" fill="#E04A18"/><path d="M7 13 L9 5 L12 7 L12 13z" fill="#F08A28"/><path d="M5 13 L6 9 L7 13z" fill="#6A3AA0"/></svg>
<div class="t" style="left:23px;top:407.0px;line-height:13px;color:#000">site Soul.jpg</div>
<div class="t" style="right:745px;top:407.0px;line-height:13px;text-align:right;color:#000;letter-spacing:0.15px">4.643.564</div>
<div class="t" style="left:291px;top:407.0px;line-height:13px;color:#000">Imagem no for…</div>
<div class="t" style="left:390.5px;top:407.0px;line-height:13px;color:#000;letter-spacing:0.15px">17/9/2012 15:27:08</div>
<svg style="position:absolute;left:6px;top:421.5px" width="16" height="16" viewBox="0 0 16 16"><path d="M2.5 0.5 h8 l3.5 3.5 v11 q0 1 -1 1 h-10.5 q-1 0 -1 -1 v-13.5 q0 -1 1 -1z" fill="#F6F9FF" stroke="#98B2E0" stroke-width="1.2"/><path d="M10.5 0.5 v3.5 h3.5z" fill="#5A8AE0"/><rect x="4" y="4" width="8" height="9" fill="#F8D070"/><path d="M4 13 L5 5 L8 6 L7 13z" fill="#E04A18"/><path d="M7 13 L9 5 L12 7 L12 13z" fill="#F08A28"/><path d="M5 13 L6 9 L7 13z" fill="#6A3AA0"/></svg>
<div class="t" style="left:23px;top:424.0px;line-height:13px;color:#000">site Soul_.jpg</div>
<div class="t" style="right:745px;top:424.0px;line-height:13px;text-align:right;color:#000;letter-spacing:0.15px">1.033.522</div>
<div class="t" style="left:291px;top:424.0px;line-height:13px;color:#000">Imagem no for…</div>
<div class="t" style="left:390.5px;top:424.0px;line-height:13px;color:#000;letter-spacing:0.15px">17/9/2012 15:28:44</div>
<svg style="position:absolute;left:6px;top:438.5px" width="16" height="16" viewBox="0 0 16 16"><path d="M2.5 0.5 h8 l3.5 3.5 v11 q0 1 -1 1 h-10.5 q-1 0 -1 -1 v-13.5 q0 -1 1 -1z" fill="#F6F9FF" stroke="#98B2E0" stroke-width="1.2"/><path d="M10.5 0.5 v3.5 h3.5z" fill="#5A8AE0"/><rect x="4" y="4" width="8" height="9" fill="#F8D070"/><path d="M4 13 L5 5 L8 6 L7 13z" fill="#E04A18"/><path d="M7 13 L9 5 L12 7 L12 13z" fill="#F08A28"/><path d="M5 13 L6 9 L7 13z" fill="#6A3AA0"/></svg>
<div class="t" style="left:23px;top:441.0px;line-height:13px;color:#000">site.jpg</div>
<div class="t" style="right:745px;top:441.0px;line-height:13px;text-align:right;color:#000;letter-spacing:0.15px">3.837.479</div>
<div class="t" style="left:291px;top:441.0px;line-height:13px;color:#000">Imagem no for…</div>
<div class="t" style="left:390.5px;top:441.0px;line-height:13px;color:#000;letter-spacing:0.15px">17/9/2012 15:55:30</div>
<svg style="position:absolute;left:6px;top:455.5px" width="16" height="16" viewBox="0 0 16 16"><rect x="2.5" y="4.5" width="12" height="10.5" rx="1" fill="#E8B808" stroke="#A07000"/><path d="M0.5 4.5 q0 -3 3 -3 h8 l1 2 v2.5 h-12z" fill="#D89A00" stroke="#A07000"/><rect x="5" y="8" width="7" height="5" fill="#C89000"/><rect x="6" y="9" width="2" height="3" fill="#F0D040"/><circle cx="13" cy="3" r="1.8" fill="#FFF8B0"/></svg>
<div class="t" style="left:23px;top:458.0px;line-height:13px;color:#000">Untitled-1.png</div>
<div class="t" style="right:745px;top:458.0px;line-height:13px;text-align:right;color:#000;letter-spacing:0.15px">23.354</div>
<div class="t" style="left:291px;top:458.0px;line-height:13px;color:#000">Adobe Firework…</div>
<div class="t" style="left:390.5px;top:458.0px;line-height:13px;color:#000;letter-spacing:0.15px">17/9/2012 05:05:49</div>
<div style="position:absolute;left:493px;top:264px;width:17px;height:210px;background:linear-gradient(90deg,#F3F1EC,#FEFEFB);"></div>
<div style="position:absolute;left:494px;top:265px;width:15px;height:16px;background:linear-gradient(135deg,#E6EEFF 0%,#C9D8FC 50%,#B4C8F6 100%);border-radius:2px;box-shadow:inset 0 0 0 1px #E4ECFE, inset -1px -1px 0 1px #A6BAE8;"><svg width="15" height="16" viewBox="0 -0.5 15 15" style="position:absolute;left:0;top:0"><path d="M3.5 9.5 L7.5 5.5 L11.5 9.5" fill="none" stroke="#4D6185" stroke-width="2"/></svg></div>
<div style="position:absolute;left:494px;top:457px;width:15px;height:16px;background:linear-gradient(135deg,#E6EEFF 0%,#C9D8FC 50%,#B4C8F6 100%);border-radius:2px;box-shadow:inset 0 0 0 1px #E4ECFE, inset -1px -1px 0 1px #A6BAE8;"><svg width="15" height="16" viewBox="0 -0.5 15 15" style="position:absolute;left:0;top:0"><path d="M3.5 5.5 L7.5 9.5 L11.5 5.5" fill="none" stroke="#4D6185" stroke-width="2"/></svg></div>
<div style="position:absolute;left:494px;top:416px;width:15px;height:39px;background:linear-gradient(90deg,#CCDAFD,#BACDF8);border-radius:2px;box-shadow:inset 0 0 0 1px #D5E0FC;"><div style="position:absolute;left:4px;top:15.5px;width:7px;height:1px;background:#EEF4FE;box-shadow:1px 1px #8CB0F8"></div><div style="position:absolute;left:4px;top:17.5px;width:7px;height:1px;background:#EEF4FE;box-shadow:1px 1px #8CB0F8"></div><div style="position:absolute;left:4px;top:19.5px;width:7px;height:1px;background:#EEF4FE;box-shadow:1px 1px #8CB0F8"></div><div style="position:absolute;left:4px;top:21.5px;width:7px;height:1px;background:#EEF4FE;box-shadow:1px 1px #8CB0F8"></div></div>
<div style="position:absolute;left:1px;top:476px;width:491px;height:17px;background:linear-gradient(#F3F1EC,#FEFEFB);"></div>
<div style="position:absolute;left:2px;top:477px;width:16px;height:15px;background:linear-gradient(135deg,#E6EEFF 0%,#C9D8FC 50%,#B4C8F6 100%);border-radius:2px;box-shadow:inset 0 0 0 1px #E4ECFE, inset -1px -1px 0 1px #A6BAE8;"><svg width="16" height="15" viewBox="-0.5 0 15 15" style="position:absolute;left:0;top:0"><path d="M9.5 3.5 L5.5 7.5 L9.5 11.5" fill="none" stroke="#4D6185" stroke-width="2"/></svg></div>
<div style="position:absolute;left:475px;top:477px;width:16px;height:15px;background:linear-gradient(135deg,#E6EEFF 0%,#C9D8FC 50%,#B4C8F6 100%);border-radius:2px;box-shadow:inset 0 0 0 1px #E4ECFE, inset -1px -1px 0 1px #A6BAE8;"><svg width="16" height="15" viewBox="-0.5 0 15 15" style="position:absolute;left:0;top:0"><path d="M5.5 3.5 L9.5 7.5 L5.5 11.5" fill="none" stroke="#4D6185" stroke-width="2"/></svg></div>
<div style="position:absolute;left:19px;top:477px;width:445px;height:15px;background:linear-gradient(90deg,#CCDAFD,#BACDF8);border-radius:2px;box-shadow:inset 0 0 0 1px #D5E0FC;"><div style="position:absolute;top:4px;left:218.5px;width:1px;height:7px;background:#EEF4FE;box-shadow:1px 1px #8CB0F8"></div><div style="position:absolute;top:4px;left:220.5px;width:1px;height:7px;background:#EEF4FE;box-shadow:1px 1px #8CB0F8"></div><div style="position:absolute;top:4px;left:222.5px;width:1px;height:7px;background:#EEF4FE;box-shadow:1px 1px #8CB0F8"></div><div style="position:absolute;top:4px;left:224.5px;width:1px;height:7px;background:#EEF4FE;box-shadow:1px 1px #8CB0F8"></div></div>
<div style="position:absolute;left:493px;top:476px;width:17px;height:15px;background:#ECE9D8;"></div>
<div style="position:absolute;left:517px;top:476px;width:505px;height:17px;background:linear-gradient(#F3F1EC,#FEFEFB);"></div>
<div style="position:absolute;left:518px;top:477px;width:16px;height:15px;background:linear-gradient(135deg,#E6EEFF 0%,#C9D8FC 50%,#B4C8F6 100%);border-radius:2px;box-shadow:inset 0 0 0 1px #E4ECFE, inset -1px -1px 0 1px #A6BAE8;"><svg width="16" height="15" viewBox="-0.5 0 15 15" style="position:absolute;left:0;top:0"><path d="M9.5 3.5 L5.5 7.5 L9.5 11.5" fill="none" stroke="#4D6185" stroke-width="2"/></svg></div>
<div style="position:absolute;left:1005px;top:477px;width:16px;height:15px;background:linear-gradient(135deg,#E6EEFF 0%,#C9D8FC 50%,#B4C8F6 100%);border-radius:2px;box-shadow:inset 0 0 0 1px #E4ECFE, inset -1px -1px 0 1px #A6BAE8;"><svg width="16" height="15" viewBox="-0.5 0 15 15" style="position:absolute;left:0;top:0"><path d="M5.5 3.5 L9.5 7.5 L5.5 11.5" fill="none" stroke="#4D6185" stroke-width="2"/></svg></div>
<div style="position:absolute;left:537px;top:477px;width:390px;height:15px;background:linear-gradient(90deg,#CCDAFD,#BACDF8);border-radius:2px;box-shadow:inset 0 0 0 1px #D5E0FC;"><div style="position:absolute;top:4px;left:191.0px;width:1px;height:7px;background:#EEF4FE;box-shadow:1px 1px #8CB0F8"></div><div style="position:absolute;top:4px;left:193.0px;width:1px;height:7px;background:#EEF4FE;box-shadow:1px 1px #8CB0F8"></div><div style="position:absolute;top:4px;left:195.0px;width:1px;height:7px;background:#EEF4FE;box-shadow:1px 1px #8CB0F8"></div><div style="position:absolute;top:4px;left:197.0px;width:1px;height:7px;background:#EEF4FE;box-shadow:1px 1px #8CB0F8"></div></div>
<div class="t" style="left:719px;top:325.0px;line-height:13px;">Lista de pastas vazia</div>
<svg style="position:absolute;left:521px;top:285px" width="16" height="16" viewBox="0 0 16 16"><defs><linearGradient id="ff" x1="0" y1="0" x2="0" y2="1"><stop offset="0" stop-color="#FFF2A8"/><stop offset="1" stop-color="#F2C632"/></linearGradient></defs><path d="M1.5 3.5 q0 -1 1 -1 h3.5 l1.5 1.5 h6.5 q1 0 1 1 v9 q0 1 -1 1 h-11.5 q-1 0 -1 -1z" fill="#EDBA3C" stroke="#B8841A"/><path d="M1.5 7 q0 -1 1 -1 h11.5 q1 0 1 1 v6.5 q0 1 -1 1 h-11.5 q-1 0 -1 -1z" fill="url(#ff)" stroke="#C08A1C"/></svg>
<div class="t" style="left:538px;top:287.0px;line-height:13px;">..</div>
<div style="position:absolute;left:1px;top:491px;width:510px;height:22px;background:#ECE9D8;border-top:1px solid #ACA899;border-left:1px solid #ACA899;border-right:1px solid #fff;border-bottom:1px solid #fff;"></div>
<div class="t" style="left:4px;top:497.0px;line-height:13px;">Selecionado 1 arquivo. Tamanho: 259.072 bytes</div>
<div style="position:absolute;left:516px;top:491px;width:506px;height:22px;background:#ECE9D8;border-top:1px solid #ACA899;border-left:1px solid #716F64;border-right:1px solid #fff;border-bottom:1px solid #fff;"></div>
<div class="t" style="left:519px;top:497.0px;line-height:13px;">Pasta vazia.</div>
<div style="position:absolute;left:0px;top:520px;width:1023px;height:170px;background:#fff;border:1px solid #7F9DB9;"></div>
<div style="position:absolute;left:1px;top:521px;width:1021px;height:21px;background:#EBEADB;box-shadow:inset 0 -1px #CBC7B8, inset 0 -2px #D6D2C2, inset 0 -3px #E2DECD;"></div>
<div style="position:absolute;left:536.5px;top:525px;width:1px;height:13px;background:#C7C5B2;"></div>
<div style="position:absolute;left:537.5px;top:525px;width:1px;height:13px;background:#FFFFFF;"></div>
<div style="position:absolute;left:596.5px;top:525px;width:1px;height:13px;background:#C7C5B2;"></div>
<div style="position:absolute;left:597.5px;top:525px;width:1px;height:13px;background:#FFFFFF;"></div>
<div style="position:absolute;left:776.5px;top:525px;width:1px;height:13px;background:#C7C5B2;"></div>
<div style="position:absolute;left:777.5px;top:525px;width:1px;height:13px;background:#FFFFFF;"></div>
<div style="position:absolute;left:857px;top:525px;width:1px;height:13px;background:#C7C5B2;"></div>
<div style="position:absolute;left:858px;top:525px;width:1px;height:13px;background:#FFFFFF;"></div>
<div style="position:absolute;left:918px;top:525px;width:1px;height:13px;background:#C7C5B2;"></div>
<div style="position:absolute;left:919px;top:525px;width:1px;height:13px;background:#FFFFFF;"></div>
<div class="t" style="left:11px;top:525.5px;line-height:13px;">Arquivo remoto/local</div>
<div class="t" style="left:549.5px;top:525.5px;line-height:13px;">Direção</div>
<div class="t" style="left:606px;top:525.5px;line-height:13px;">Arquivo remoto</div>
<div class="t" style="right:172.5px;top:525.5px;line-height:13px;text-align:right;">Tamanho</div>
<div class="t" style="left:866px;top:525.5px;line-height:13px;">Priorid…</div>
<div class="t" style="left:926.5px;top:525.5px;line-height:13px;">Status</div>
<svg style="position:absolute;left:8px;top:541.5px" width="12" height="16" viewBox="0 0 12 16"><rect x="3.5" y="0.5" width="5" height="11" fill="#7EA8E8" stroke="#4A78C8"/><rect x="5" y="1" width="2" height="10" fill="#C8DCFA"/><path d="M1 12 h10 l-5 3z" fill="#3A68B8"/></svg>
<svg style="position:absolute;left:7px;top:558.5px" width="13" height="17" viewBox="0 0 13 17"><rect x="0.5" y="0.5" width="12" height="16" rx="1" fill="#FAFAFA" stroke="#A0A0A0"/></svg>
<div class="t" style="left:23px;top:544.5px;line-height:13px;">ftp.copiadoraobjetiva.com.br</div>
<div class="t" style="left:29.5px;top:562.0px;line-height:13px;">C:\Documents and Settings\Administrador\Desktop\Plotagem.jpg</div>
<div class="t" style="left:555px;top:562.0px;line-height:13px;letter-spacing:1.2px">--&gt;&gt;</div>
<div class="t" style="left:603px;top:562.0px;line-height:13px;letter-spacing:0.15px">/teste/Plotagem.jpg</div>
<div class="t" style="right:172.5px;top:562.0px;line-height:13px;text-align:right;">259.072</div>
<div class="t" style="left:863px;top:562.0px;line-height:13px;">Normal</div>
<div class="t" style="left:924px;top:562.0px;line-height:13px;">Transferindo</div>
<div class="t" style="left:57.5px;top:579.0px;line-height:13px;">00:00:00 decorridos</div>
<div class="t" style="left:192px;top:579.0px;line-height:13px;">--:--:-- restantes</div>
<div style="position:absolute;left:293.5px;top:577.5px;width:102.5px;height:15px;background:#00CC00;border:1px solid #1A2A1A;"></div>
<div class="t" style="left:325px;top:579.0px;line-height:13px;color:#003A00">100.0%</div>
<div class="t" style="left:415px;top:579.0px;line-height:13px;">259.072 bytes (? B/s)</div>
<div style="position:absolute;left:1px;top:673px;width:1021px;height:17px;background:linear-gradient(#F3F1EC,#FEFEFB);"></div>
<div style="position:absolute;left:2px;top:674px;width:16px;height:15px;background:linear-gradient(135deg,#E6EEFF 0%,#C9D8FC 50%,#B4C8F6 100%);border-radius:2px;box-shadow:inset 0 0 0 1px #E4ECFE, inset -1px -1px 0 1px #A6BAE8;"><svg width="16" height="15" viewBox="-0.5 0 15 15" style="position:absolute;left:0;top:0"><path d="M9.5 3.5 L5.5 7.5 L9.5 11.5" fill="none" stroke="#4D6185" stroke-width="2"/></svg></div>
<div style="position:absolute;left:1005px;top:674px;width:16px;height:15px;background:linear-gradient(135deg,#E6EEFF 0%,#C9D8FC 50%,#B4C8F6 100%);border-radius:2px;box-shadow:inset 0 0 0 1px #E4ECFE, inset -1px -1px 0 1px #A6BAE8;"><svg width="16" height="15" viewBox="-0.5 0 15 15" style="position:absolute;left:0;top:0"><path d="M5.5 3.5 L9.5 7.5 L5.5 11.5" fill="none" stroke="#4D6185" stroke-width="2"/></svg></div>
<div style="position:absolute;left:19px;top:674px;width:941px;height:15px;background:linear-gradient(90deg,#CCDAFD,#BACDF8);border-radius:2px;box-shadow:inset 0 0 0 1px #D5E0FC;"><div style="position:absolute;top:4px;left:466.5px;width:1px;height:7px;background:#EEF4FE;box-shadow:1px 1px #8CB0F8"></div><div style="position:absolute;top:4px;left:468.5px;width:1px;height:7px;background:#EEF4FE;box-shadow:1px 1px #8CB0F8"></div><div style="position:absolute;top:4px;left:470.5px;width:1px;height:7px;background:#EEF4FE;box-shadow:1px 1px #8CB0F8"></div><div style="position:absolute;top:4px;left:472.5px;width:1px;height:7px;background:#EEF4FE;box-shadow:1px 1px #8CB0F8"></div></div>
<div style="position:absolute;left:0px;top:690px;width:1024px;height:23px;background:#ECE9D8;"></div>
<div style="position:absolute;left:130.5px;top:693px;width:158px;height:19px;background:linear-gradient(#F8F7F2,#E6E3D6);border:1px solid #B9B5A5;border-bottom:none;border-radius:2px 2px 0 0;"></div>
<div class="t" style="left:137.5px;top:696.0px;line-height:13px;">Transferências com falha</div>
<div style="position:absolute;left:288.5px;top:693px;width:186px;height:19px;background:linear-gradient(#F8F7F2,#E6E3D6);border:1px solid #B9B5A5;border-bottom:none;border-radius:2px 2px 0 0;"></div>
<div class="t" style="left:294px;top:696.0px;line-height:13px;">Transferências bem sucedidas</div>
<div style="position:absolute;left:5px;top:691px;width:124.5px;height:21px;background:linear-gradient(#FFFFFF,#F2F1EA);border:1px solid #B0AC9C;border-bottom:none;border-radius:3px 3px 0 0;"></div>
<div class="t" style="left:12.5px;top:695.0px;line-height:13px;font-weight:bold;letter-spacing:0.35px">Arquivos na fila (1)</div>
<div style="position:absolute;left:0px;top:712px;width:1024px;height:1px;background:#FFFFFF;"></div>
<div style="position:absolute;left:0px;top:713px;width:1024px;height:2px;background:#E2DFD0;"></div>
<div style="position:absolute;left:0px;top:715px;width:1024px;height:1px;background:#C9C5B5;"></div>
<div style="position:absolute;left:0px;top:716px;width:1024px;height:22px;background:linear-gradient(#EAE7D7,#F1EFE4);"></div>
<div style="position:absolute;left:855px;top:720.5px;width:12px;height:15px;background:#fff;border:1px solid #9A9A9A;"><svg width="10" height="13" style="position:absolute;left:0;top:0"><path d="M2 12 L6 2 M3 7 h4 M6 2 L7 12" stroke="#000" stroke-width="1.3" fill="none"/></svg></div>
<div style="position:absolute;left:871px;top:723px;width:17px;height:8px;background:#2A2A2A;"><div style="position:absolute;left:2px;top:3px;width:13px;height:2px;background:repeating-linear-gradient(90deg,#ddd 0 2px,transparent 2px 3px)"></div></div>
<div class="t" style="left:896.5px;top:721.0px;line-height:13px;">Fila: 253,0 KiB</div>
<div style="position:absolute;left:987px;top:719px;width:1px;height:18px;background:#C5C2B2;"></div>
<div style="position:absolute;left:988px;top:719px;width:1px;height:18px;background:#fff;"></div>
<div style="position:absolute;left:993px;top:723px;width:9px;height:9px;background:radial-gradient(circle at 40% 35%,#4A8A4A,#0A3A0A 70%);border-radius:50%;"></div>
<div style="position:absolute;left:1006px;top:723px;width:9px;height:9px;background:radial-gradient(circle at 40% 35%,#9A4A4A,#4A0A0A 70%);border-radius:50%;"></div>
<div style="position:absolute;left:0px;top:738px;width:106px;height:3px;background:#3A9A3A;"></div>
<div style="position:absolute;left:106px;top:738px;width:918px;height:3px;background:#2A62E0;"></div>
</div></body></html>
